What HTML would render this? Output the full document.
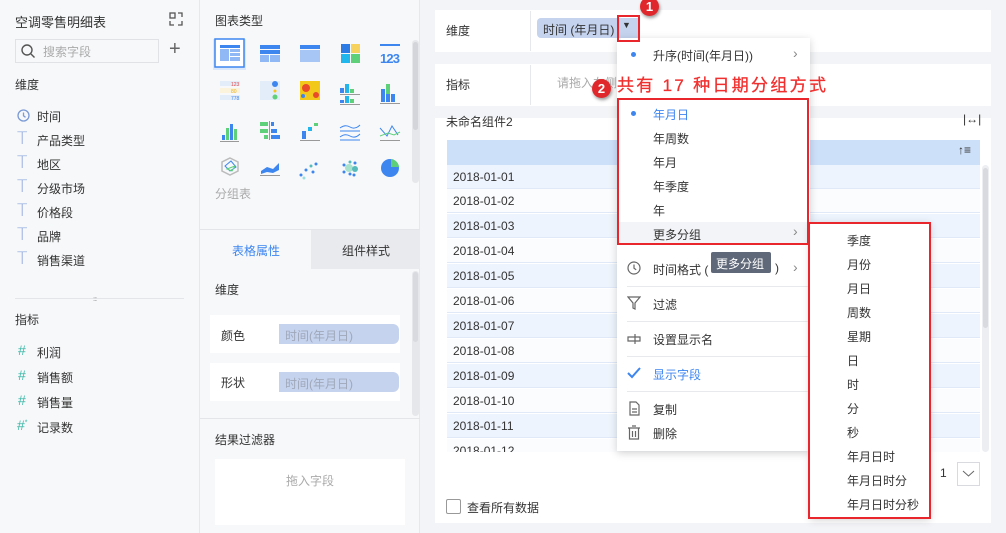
<!DOCTYPE html>
<html><head><meta charset="utf-8"><style>
*{margin:0;padding:0;box-sizing:border-box}
body{width:1006px;height:533px;overflow:hidden;font-family:"Liberation Sans","Noto Sans CJK SC",sans-serif;font-size:12px;color:#333;background:#f3f4f7;position:relative}
.a{position:absolute}
.t{position:absolute;white-space:nowrap}
.lp{left:0;top:0;width:200px;height:533px;background:#f7f8fa;border-right:1px solid #e6e8ec}
.mp{left:200px;top:0;width:220px;height:533px;background:#f7f8fa;border-right:1px solid #e6e8ec}
.ic{color:#8aa6dc;font-size:17px;font-family:"DejaVu Sans",sans-serif;font-weight:300}
.hs{color:#3cb8a8;font-size:14px}
.card{background:#fff}
.row{position:absolute;left:447px;width:533px;height:24px;border-bottom:1px solid #dfe9f8;padding-left:6px;line-height:24px;font-size:12px;color:#333}
.menu{background:#fff;box-shadow:0 2px 8px rgba(0,0,0,.18)}
.rb{position:absolute;border:2px solid #e8262c}
.badge{position:absolute;width:19px;height:19px;border-radius:50%;background:#e0282c;color:#fff;font-weight:bold;font-size:13px;text-align:center;line-height:19px;box-shadow:1px 2px 3px rgba(0,0,0,.4)}
.sep{position:absolute;left:627px;width:183px;height:1px;background:#e8e9ec}
</style></head><body>
<div class="a lp"></div>
<div class="t" style="left:15px;top:12px;font-size:13px;color:#333">空调零售明细表</div>
<svg class="a" style="left:168px;top:11px" width="16" height="16" viewBox="0 0 16 16" fill="none" stroke="#555" stroke-width="1.3"><rect x="2" y="2" width="5" height="5"/><path d="M10 2h4v4M2 10v4h4M10 14h4v-4"/></svg>
<div class="a" style="left:15px;top:39px;width:144px;height:24px;border:1px solid #e0e2e6;background:#f7f8fa"></div>
<svg class="a" style="left:20px;top:43px" width="16" height="16" viewBox="0 0 16 16" fill="none" stroke="#555" stroke-width="1.4"><circle cx="7" cy="7" r="5"/><path d="M11 11l3.5 3.5"/></svg>
<div class="t" style="left:43px;top:43px;color:#aaa">搜索字段</div>
<div class="t" style="left:169px;top:38px;font-size:20px;color:#666">+</div>
<div class="t" style="left:15px;top:76px">维度</div>
<svg class="a" style="left:17px;top:109px" width="13" height="13" viewBox="0 0 13 13" fill="none" stroke="#7b9ad6" stroke-width="1.3"><circle cx="6.5" cy="6.5" r="5.5"/><path d="M6.5 3.5v3.3l2 1.5"/></svg>
<div class="t" style="left:37px;top:108px">时间</div>
<div class="t ic" style="left:17px;top:129px">T</div><div class="t" style="left:37px;top:132px">产品类型</div>
<div class="t ic" style="left:17px;top:153px">T</div><div class="t" style="left:37px;top:156px">地区</div>
<div class="t ic" style="left:17px;top:177px">T</div><div class="t" style="left:37px;top:180px">分级市场</div>
<div class="t ic" style="left:17px;top:201px">T</div><div class="t" style="left:37px;top:204px">价格段</div>
<div class="t ic" style="left:17px;top:225px">T</div><div class="t" style="left:37px;top:228px">品牌</div>
<div class="t ic" style="left:17px;top:249px">T</div><div class="t" style="left:37px;top:252px">销售渠道</div>
<div class="a" style="left:15px;top:298px;width:169px;height:1px;background:#e3e5e9"></div>
<div class="t" style="left:93px;top:297px;font-size:6px;color:#999;letter-spacing:-1px">:::::</div>
<div class="t" style="left:15px;top:311px">指标</div>
<div class="t hs" style="left:18px;top:342px">#</div><div class="t" style="left:37px;top:344px">利润</div>
<div class="t hs" style="left:18px;top:367px">#</div><div class="t" style="left:37px;top:369px">销售额</div>
<div class="t hs" style="left:18px;top:392px">#</div><div class="t" style="left:37px;top:394px">销售量</div>
<div class="t hs" style="left:17px;top:417px">#<sup style="font-size:7px">*</sup></div><div class="t" style="left:37px;top:419px">记录数</div>

<div class="a mp"></div>
<div class="t" style="left:215px;top:12px">图表类型</div>
<div class="a" style="left:412px;top:40px;width:7px;height:143px;background:#e6e7ea;border-radius:4px"></div>
<div class="a" style="left:413px;top:42px;width:5px;height:88px;background:#d3d5da;border-radius:3px"></div>
<svg class="a" style="left:210px;top:38px" width="200" height="148" viewBox="0 0 200 148">
<rect x="3" y="1" width="33" height="31" fill="#dbe7fa"/><rect x="5" y="1" width="29" height="28" fill="#fff" stroke="#3d86f0" stroke-width="1.5"/>
<rect x="10" y="7" width="20" height="3" fill="#3d86f0"/><rect x="10" y="11" width="9" height="12" fill="#8fb8f5"/><rect x="20" y="11" width="10" height="3" fill="#8fb8f5"/><rect x="20" y="15" width="10" height="3" fill="#8fb8f5"/><rect x="20" y="19" width="10" height="4" fill="#8fb8f5"/>
<rect x="50" y="7" width="20" height="4" fill="#3d86f0"/><rect x="50" y="12" width="20" height="4" fill="#3d86f0"/><rect x="50" y="17" width="9" height="7" fill="#8fb8f5"/><rect x="60" y="17" width="10" height="7" fill="#8fb8f5"/>
<rect x="90" y="7" width="20" height="4" fill="#3d86f0"/><rect x="90" y="12" width="20" height="12" fill="#a7c6f6"/>
<rect x="131" y="6" width="9" height="9" fill="#2c7be5"/><rect x="141" y="6" width="9" height="9" fill="#f7c21a" opacity=".7"/><rect x="131" y="16" width="9" height="9" fill="#22b7ec"/><rect x="141" y="16" width="9" height="9" fill="#5fd07a"/>
<rect x="170" y="6" width="20" height="2" fill="#3d86f0"/><text x="170" y="25" font-size="13" fill="#3d86f0" font-family="Liberation Sans" font-weight="bold" textLength="20">123</text>
<rect x="10" y="43" width="20" height="5" fill="#e3ecf9"/><rect x="10" y="50" width="20" height="5" fill="#fbf3dc"/><rect x="10" y="57" width="20" height="5" fill="#e3ecf9"/><text x="21" y="48" font-size="5" fill="#e84a4a">123</text><text x="21" y="55" font-size="5" fill="#e8b020">80</text><text x="21" y="62" font-size="5" fill="#3d86f0">778</text>
<rect x="50" y="43" width="20" height="19" fill="#e3ecf9"/><circle cx="65" cy="46" r="3" fill="#3d86f0"/><circle cx="65" cy="53" r="1.5" fill="#f7c21a"/><circle cx="65" cy="59" r="2.5" fill="#5fd07a"/>
<rect x="90" y="43" width="20" height="19" fill="#f2c81a"/><circle cx="96" cy="50" r="4" fill="#e84a2a"/><circle cx="106" cy="57" r="3" fill="#e84a2a"/><circle cx="93" cy="58" r="2" fill="#3d86f0"/>
<rect x="130" y="50" width="4" height="5" fill="#3d86f0"/><rect x="135" y="46" width="4" height="9" fill="#22b7ec"/><rect x="140" y="51" width="4" height="4" fill="#5fd07a"/><rect x="130" y="56" width="20" height="1" fill="#999"/><rect x="130" y="62" width="4" height="3" fill="#3d86f0"/><rect x="135" y="58" width="4" height="7" fill="#22b7ec"/><rect x="140" y="61" width="4" height="4" fill="#5fd07a"/><rect x="130" y="66" width="20" height="1" fill="#999"/>
<rect x="171" y="51" width="4" height="13" fill="#3d86f0"/><rect x="176" y="46" width="4" height="18" fill="#5fd07a"/><rect x="176" y="56" width="4" height="8" fill="#3d86f0"/><rect x="181" y="56" width="4" height="8" fill="#3d86f0"/><rect x="170" y="65" width="20" height="1" fill="#999"/>
<rect x="12" y="97" width="3" height="5" fill="#3d86f0"/><rect x="16" y="90" width="3" height="12" fill="#5fd07a"/><rect x="20" y="86" width="3" height="16" fill="#3d86f0"/><rect x="24" y="91" width="3" height="11" fill="#5fd07a"/><rect x="10" y="103" width="19" height="1" fill="#999"/>
<rect x="50" y="84" width="8" height="4" fill="#5fd07a"/><rect x="61" y="84" width="3" height="4" fill="#3d86f0"/><rect x="50" y="91" width="8" height="4" fill="#5fd07a"/><rect x="61" y="91" width="6" height="4" fill="#3d86f0"/><rect x="54" y="97" width="4" height="4" fill="#5fd07a"/><rect x="61" y="97" width="9" height="4" fill="#3d86f0"/><rect x="59" y="83" width="1" height="19" fill="#999"/>
<rect x="92" y="93" width="4" height="8" fill="#3d86f0"/><rect x="98" y="89" width="4" height="4" fill="#22b7ec"/><rect x="104" y="85" width="4" height="3" fill="#5fd07a"/><rect x="90" y="102" width="20" height="1" fill="#999"/>
<path d="M130 90q5-4 10-1t10-2M130 99q5-4 10-1t10-2M130 93h20M130 102h20" stroke="#3d86f0" fill="none" stroke-width="1"/>
<path d="M170 90l7 8 5-10 6 9" stroke="#3d86f0" fill="none"/><path d="M170 98l8-3 6 2 6-3" stroke="#5fd07a" fill="none"/><rect x="170" y="102" width="20" height="1" fill="#999"/>
<polygon points="20,120 28,124 28,133 20,137 12,133 12,124" fill="none" stroke="#bbb" stroke-width="1.5"/><path d="M15 128l6-5 5 6-6 4z" fill="none" stroke="#3d86f0"/><path d="M17 131l8-3-3 5z" fill="none" stroke="#5fd07a"/>
<path d="M51 133l6-4 6 2 6-6v7l-6 3-6-1-6 2z" fill="#3d86f0"/><rect x="50" y="137" width="20" height="1" fill="#999"/>
<circle cx="91" cy="137" r="1.5" fill="#3d86f0"/><circle cx="96" cy="132" r="1.5" fill="#3d86f0"/><circle cx="101" cy="128" r="1.5" fill="#5bb"/><circle cx="106" cy="126" r="1.5" fill="#3d86f0"/><circle cx="94" cy="140" r="1.5" fill="#9dd"/><circle cx="103" cy="134" r="1.5" fill="#3d86f0"/>
<circle cx="139" cy="130" r="4" fill="#a8e2cc"/><circle cx="145" cy="131" r="3" fill="#5bb"/><circle cx="134" cy="127" r="1.5" fill="#3d86f0"/><circle cx="134" cy="134" r="1.5" fill="#3d86f0"/><circle cx="140" cy="124" r="1.5" fill="#5bb"/><circle cx="140" cy="136" r="1.5" fill="#3d86f0"/><circle cx="145" cy="125" r="1.5" fill="#3d86f0"/><circle cx="144" cy="137" r="1.5" fill="#3d86f0"/>
<circle cx="180" cy="130" r="9" fill="#3d86f0"/><path d="M181 121a9 9 0 0 1 8 8h-8z" fill="#5fd07a"/>
</svg>
<div class="t" style="left:215px;top:185px;color:#aaa">分组表</div>
<div class="a" style="left:200px;top:229px;width:220px;height:1px;background:#e3e5e9"></div>
<div class="a" style="left:311px;top:230px;width:109px;height:39px;background:#e9eaee"></div>
<div class="t" style="left:232px;top:242px;color:#3d86f0">表格属性</div>
<div class="t" style="left:342px;top:242px;color:#333">组件样式</div>
<div class="a" style="left:412px;top:271px;width:7px;height:145px;background:#e6e7ea;border-radius:4px"></div>
<div class="a" style="left:413px;top:272px;width:5px;height:70px;background:#d8dadf;border-radius:3px"></div>
<div class="t" style="left:215px;top:281px">维度</div>
<div class="a card" style="left:210px;top:315px;width:190px;height:38px"></div>
<div class="t" style="left:221px;top:327px">颜色</div>
<div class="a" style="left:279px;top:324px;width:120px;height:20px;background:#c5d3ee;border-radius:0 6px 6px 0"></div>
<div class="t" style="left:285px;top:327px;color:#a0a8ba">时间(年月日)</div>
<div class="a card" style="left:210px;top:363px;width:190px;height:38px"></div>
<div class="t" style="left:221px;top:374px">形状</div>
<div class="a" style="left:279px;top:372px;width:120px;height:20px;background:#c5d3ee;border-radius:0 6px 6px 0"></div>
<div class="t" style="left:285px;top:375px;color:#a0a8ba">时间(年月日)</div>
<div class="a" style="left:200px;top:418px;width:220px;height:1px;background:#e3e5e9"></div>
<div class="t" style="left:215px;top:431px">结果过滤器</div>
<div class="a card" style="left:215px;top:459px;width:190px;height:66px"></div>
<div class="t" style="left:286px;top:472px;color:#aaa">拖入字段</div>

<div class="a card" style="left:435px;top:10px;width:556px;height:42px"></div>
<div class="a" style="left:530px;top:11px;width:1px;height:40px;background:#e6e8ec"></div>
<div class="t" style="left:446px;top:22px">维度</div>
<div class="a" style="left:537px;top:18px;width:102px;height:20px;background:#c5d3ee;border-radius:4px 0 0 4px"></div>
<div class="t" style="left:543px;top:21px">时间 (年月日)</div>
<div class="t" style="left:622px;top:20px;font-size:9px;color:#333">▼</div>
<div class="a card" style="left:435px;top:64px;width:556px;height:42px"></div>
<div class="a" style="left:530px;top:65px;width:1px;height:40px;background:#e6e8ec"></div>
<div class="t" style="left:446px;top:76px">指标</div>
<div class="t" style="left:557px;top:74px;color:#aaa">请拖入左侧</div>
<div class="a card" style="left:435px;top:118px;width:556px;height:405px"></div>
<div class="t" style="left:446px;top:113px">未命名组件2</div>
<div class="t" style="left:963px;top:112px;font-size:12px">|↔|</div>
<div class="a" style="left:447px;top:140px;width:533px;height:25px;background:#cde0fa"></div>
<div class="t" style="left:958px;top:143px;font-size:12px">↑≡</div>
<div class="row" style="top:165px;background:#eef4fd">2018-01-01</div>
<div class="row" style="top:189px;background:#fbfcfe">2018-01-02</div>
<div class="row" style="top:214px;background:#eef4fd">2018-01-03</div>
<div class="row" style="top:239px;background:#fbfcfe">2018-01-04</div>
<div class="row" style="top:264px;background:#eef4fd">2018-01-05</div>
<div class="row" style="top:289px;background:#fbfcfe">2018-01-06</div>
<div class="row" style="top:314px;background:#eef4fd">2018-01-07</div>
<div class="row" style="top:339px;background:#fbfcfe">2018-01-08</div>
<div class="row" style="top:364px;background:#eef4fd">2018-01-09</div>
<div class="row" style="top:389px;background:#fbfcfe">2018-01-10</div>
<div class="row" style="top:414px;background:#eef4fd">2018-01-11</div>
<div class="a" style="left:447px;top:439px;width:533px;height:13px;overflow:hidden"><div style="padding-left:6px;line-height:24px;background:#fbfcfe">2018-01-12</div></div>
<div class="a" style="left:982px;top:165px;width:7px;height:287px;background:#eceef1;border-radius:4px"></div>
<div class="a" style="left:983px;top:168px;width:5px;height:160px;background:#d8dadf;border-radius:3px"></div>
<div class="t" style="left:940px;top:466px">1</div>
<div class="a" style="left:957px;top:462px;width:23px;height:24px;border:1px solid #d8dadf;background:#fff"></div>
<svg class="a" style="left:962px;top:469px" width="13" height="9"><path d="M1 2l5.5 5 5.5-5" stroke="#666" fill="none"/></svg>
<div class="a" style="left:446px;top:499px;width:15px;height:15px;border:1px solid #999;border-radius:2px;background:#fff"></div>
<div class="t" style="left:467px;top:499px">查看所有数据</div>

<div class="a menu" style="left:617px;top:38px;width:193px;height:413px"></div>
<div class="a" style="left:631px;top:52px;width:5px;height:5px;border-radius:50%;background:#3d86f0"></div>
<div class="t" style="left:653px;top:47px">升序(时间(年月日))</div>
<div class="t" style="left:793px;top:45px;color:#888;font-size:14px">›</div>
<div class="a" style="left:631px;top:111px;width:5px;height:5px;border-radius:50%;background:#3d86f0"></div>
<div class="t" style="left:653px;top:106px;color:#3d86f0">年月日</div>
<div class="t" style="left:653px;top:130px">年周数</div>
<div class="t" style="left:653px;top:154px">年月</div>
<div class="t" style="left:653px;top:178px">年季度</div>
<div class="t" style="left:653px;top:202px">年</div>
<div class="a" style="left:619px;top:222px;width:189px;height:22px;background:#f3f4f7"></div>
<div class="t" style="left:653px;top:226px">更多分组</div>
<div class="t" style="left:793px;top:223px;color:#888;font-size:14px">›</div>
<svg class="a" style="left:627px;top:261px" width="14" height="14" viewBox="0 0 14 14" fill="none" stroke="#666" stroke-width="1.2"><circle cx="7" cy="7" r="6"/><path d="M7 3.5v3.7l2.2 1.6"/></svg>
<div class="t" style="left:653px;top:261px">时间格式 (</div>
<div class="t" style="left:775px;top:261px">)</div>
<div class="t" style="left:793px;top:259px;color:#888;font-size:14px">›</div>
<div class="sep" style="top:286px"></div>
<svg class="a" style="left:627px;top:296px" width="14" height="14" viewBox="0 0 14 14" fill="none" stroke="#666" stroke-width="1.2"><path d="M1 1h12L8 7v6L6 12V7z"/></svg>
<div class="t" style="left:653px;top:296px">过滤</div>
<div class="sep" style="top:321px"></div>
<svg class="a" style="left:627px;top:332px" width="14" height="14" viewBox="0 0 14 14" fill="none" stroke="#666" stroke-width="1.2"><path d="M1 5h12v4H1zM8 2v10"/></svg>
<div class="t" style="left:653px;top:331px">设置显示名</div>
<div class="sep" style="top:356px"></div>
<svg class="a" style="left:627px;top:367px" width="14" height="12" viewBox="0 0 14 12" fill="none" stroke="#3d86f0" stroke-width="2"><path d="M1 6l4 4 8-9"/></svg>
<div class="t" style="left:653px;top:366px;color:#3d86f0">显示字段</div>
<div class="sep" style="top:391px"></div>
<svg class="a" style="left:627px;top:401px" width="14" height="15" viewBox="0 0 14 15" fill="none" stroke="#666" stroke-width="1.2"><path d="M3 1h6l3 3v10H3zM5 8h5M5 11h5"/></svg>
<div class="t" style="left:653px;top:401px">复制</div>
<svg class="a" style="left:627px;top:425px" width="14" height="15" viewBox="0 0 14 15" fill="none" stroke="#666" stroke-width="1.2"><path d="M1 3h12M5 1h4M2.5 3v11h9V3M5.5 6v6M8.5 6v6"/></svg>
<div class="t" style="left:653px;top:425px">删除</div>
<div class="a" style="left:711px;top:252px;width:60px;height:21px;background:#5f6878;border-radius:2px"></div>
<div class="t" style="left:716px;top:255px;color:#fff">更多分组</div>

<div class="a menu" style="left:810px;top:222px;width:120px;height:296px"></div>
<div class="t" style="left:847px;top:232px">季度</div>
<div class="t" style="left:847px;top:256px">月份</div>
<div class="t" style="left:847px;top:280px">月日</div>
<div class="t" style="left:847px;top:304px">周数</div>
<div class="t" style="left:847px;top:328px">星期</div>
<div class="t" style="left:847px;top:352px">日</div>
<div class="t" style="left:847px;top:376px">时</div>
<div class="t" style="left:847px;top:400px">分</div>
<div class="t" style="left:847px;top:424px">秒</div>
<div class="t" style="left:847px;top:448px">年月日时</div>
<div class="t" style="left:847px;top:472px">年月日时分</div>
<div class="t" style="left:847px;top:496px">年月日时分秒</div>

<div class="rb" style="left:617px;top:15px;width:23px;height:27px"></div>
<div class="rb" style="left:617px;top:98px;width:192px;height:147px"></div>
<div class="rb" style="left:808px;top:222px;width:123px;height:297px"></div>
<div class="badge" style="left:640px;top:-3px">1</div>
<div class="badge" style="left:592px;top:79px">2</div>
<div class="t" style="left:617px;top:71px;color:#f0302f;font-size:17px;letter-spacing:2.3px;-webkit-text-stroke:0.3px #f0302f">共有 17 种日期分组方式</div>
</body></html>
